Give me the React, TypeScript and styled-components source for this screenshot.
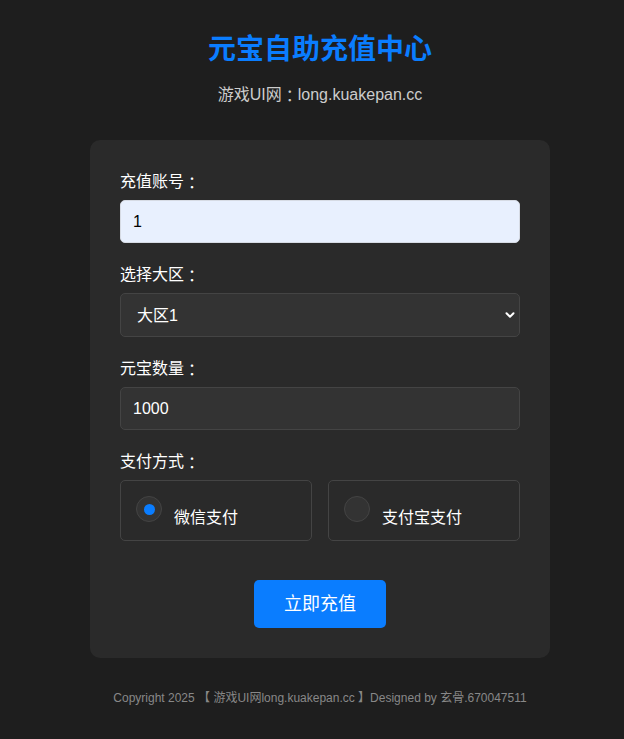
import React, { useState } from "react";
import styled, { createGlobalStyle } from "styled-components";

const Global = createGlobalStyle`
  html, body { margin: 0; padding: 0; background: #1e1e1e; }
  body {
    font-family: "Liberation Sans", Arial, "Noto Sans CJK SC", sans-serif;
    color: #fff;
  }
  * { box-sizing: border-box; }
`;

const Page = styled.div`
  padding: 33px 0 0 16px;
  display: flex;
  flex-direction: column;
  align-items: center;
`;

const Title = styled.h1`
  margin: 0;
  font-size: 28px;
  line-height: 34px;
  font-weight: bold;
  color: #0a7dff;
`;

const Subtitle = styled.p`
  margin: 16px 0 0;
  height: 24px;
  font-size: 16px;
  line-height: 24px;
  color: #cccccc;
`;

const Colon = styled.span`
  font-family: "Noto Sans CJK TC", sans-serif;
  line-height: 24px;
  vertical-align: top;
`;

const Card = styled.form`
  margin-top: 33px;
  width: 460px;
  background: #2a2a2a;
  border-radius: 10px;
  padding: 30px;
  display: flex;
  flex-direction: column;
`;

const Group = styled.div`
  display: flex;
  flex-direction: column;
  margin-bottom: 20px;
`;

const Label = styled.label`
  height: 24px;
  font-size: 16px;
  line-height: 24px;
  margin-bottom: 6px;
  color: #ffffff;
`;

const Input = styled.input<{ $filled?: boolean }>`
  width: 100%;
  height: 43px;
  padding: 0 12px;
  font-family: inherit;
  font-size: 16px;
  border-radius: 5px;
  border: 1px solid ${(p) => (p.$filled ? "#d6dbe4" : "#444444")};
  background: ${(p) => (p.$filled ? "#e8f0fe" : "#333333")};
  color: ${(p) => (p.$filled ? "#000000" : "#ffffff")};
  outline: none;
`;

const SelectWrap = styled.div`
  position: relative;
`;

const Select = styled.select`
  width: 100%;
  height: 44px;
  padding: 0 16px;
  font-family: inherit;
  font-size: 16px;
  border-radius: 5px;
  border: 1px solid #444444;
  background: #333333;
  color: #ffffff;
  appearance: none;
  -webkit-appearance: none;
  outline: none;
`;

const Chevron = styled.svg`
  position: absolute;
  right: 5px;
  top: 50%;
  transform: translateY(-50%);
  width: 10px;
  height: 10px;
  pointer-events: none;
`;

const Options = styled.div`
  display: grid;
  grid-template-columns: 1fr 1fr;
  gap: 16px;
`;

const Option = styled.label`
  display: flex;
  align-items: flex-start;
  gap: 12px;
  padding: 15px 15px 12px;
  border: 1px solid #444444;
  border-radius: 5px;
  cursor: pointer;
`;

const Radio = styled.span<{ $checked?: boolean }>`
  width: 26px;
  height: 26px;
  flex: none;
  border-radius: 50%;
  background: #333333;
  border: 1px solid #444444;
  display: flex;
  align-items: center;
  justify-content: center;
  &::after {
    content: "";
    width: 11px;
    height: 11px;
    border-radius: 50%;
    background: ${(p) => (p.$checked ? "#0a7dff" : "transparent")};
  }
`;

const OptionText = styled.span`
  margin-top: 12px;
  font-size: 16px;
  line-height: 20px;
  color: #ffffff;
`;

const Actions = styled.div`
  display: flex;
  justify-content: center;
  margin-top: 19px;
`;

const Button = styled.button`
  padding: 12px 30px;
  font-family: inherit;
  font-size: 18px;
  line-height: 24px;
  color: #ffffff;
  background: #0a7dff;
  border: none;
  border-radius: 5px;
  cursor: pointer;
`;

const Footer = styled.footer`
  margin-top: 30px;
  font-size: 12px;
  line-height: 20px;
  color: #888888;
`;

export default function App() {
  const [pay, setPay] = useState("wx");
  return (
    <>
      <Global />
      <Page>
        <Title>元宝自助充值中心</Title>
        <Subtitle>
          游戏UI网<Colon>：</Colon>long.kuakepan.cc
        </Subtitle>
        <Card onSubmit={(e) => e.preventDefault()}>
          <Group>
            <Label>
              充值账号<Colon>：</Colon>
            </Label>
            <Input $filled defaultValue="1" />
          </Group>
          <Group>
            <Label>
              选择大区<Colon>：</Colon>
            </Label>
            <SelectWrap>
              <Select defaultValue="1">
                <option value="1">大区1</option>
                <option value="2">大区2</option>
                <option value="3">大区3</option>
              </Select>
              <Chevron viewBox="0 0 10 10">
                <path d="M1.5 3.2 L5 6.7 L8.5 3.2" fill="none" stroke="#ffffff" strokeWidth="2" strokeLinecap="round" strokeLinejoin="round" />
              </Chevron>
            </SelectWrap>
          </Group>
          <Group>
            <Label>
              元宝数量<Colon>：</Colon>
            </Label>
            <Input defaultValue="1000" />
          </Group>
          <Group>
            <Label>
              支付方式<Colon>：</Colon>
            </Label>
            <Options>
              <Option onClick={() => setPay("wx")}>
                <Radio $checked={pay === "wx"} />
                <OptionText>微信支付</OptionText>
              </Option>
              <Option onClick={() => setPay("ali")}>
                <Radio $checked={pay === "ali"} />
                <OptionText>支付宝支付</OptionText>
              </Option>
            </Options>
          </Group>
          <Actions>
            <Button type="submit">立即充值</Button>
          </Actions>
        </Card>
        <Footer>Copyright 2025 【 游戏UI网long.kuakepan.cc 】Designed by 玄骨.670047511</Footer>
      </Page>
    </>
  );
}
